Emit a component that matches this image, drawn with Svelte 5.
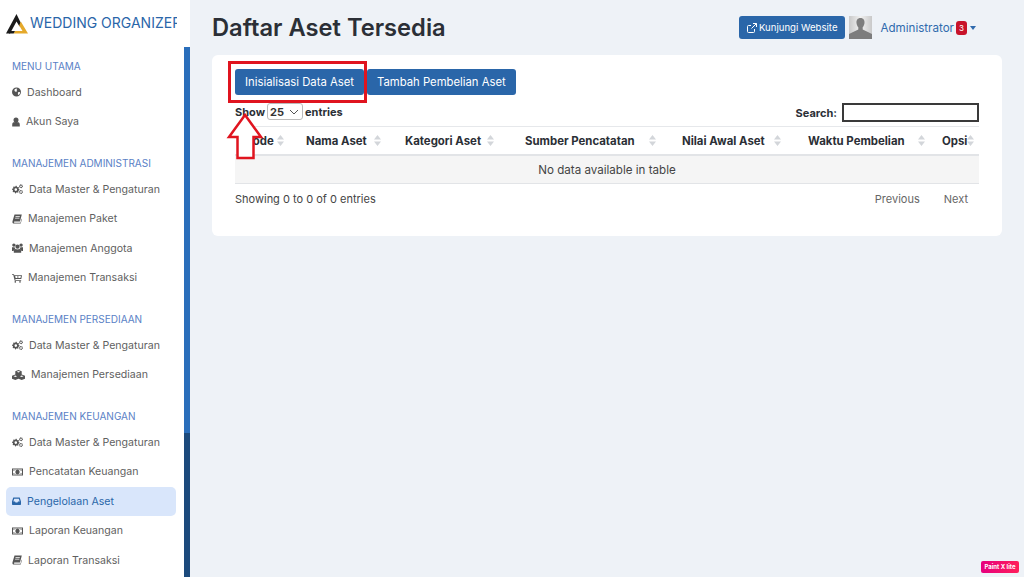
<script>
	// gear outline as a path, hole cut through with evenodd
	function gear(cx, cy, r, hole, teeth = 8) {
		let d = '';
		for (let i = 0; i < teeth * 4; i++) {
			const a = (i / (teeth * 4)) * Math.PI * 2;
			const rad = i % 4 < 2 ? r : r * 0.78;
			d += `${i ? 'L' : 'M'}${(cx + rad * Math.cos(a)).toFixed(2)} ${(cy + rad * Math.sin(a)).toFixed(2)}`;
		}
		d += 'z';
		d += `M${cx - hole} ${cy}a${hole} ${hole} 0 1 0 ${hole * 2} 0a${hole} ${hole} 0 1 0 ${-hole * 2} 0z`;
		return d;
	}

	const icons = {
		globe: { w: 9, d: 'M4.5.5a4.5 4.5 0 1 0 0 9a4.5 4.5 0 1 0 0-9zM2.6 2.2l1.7-.8 1 .6-.9 1 .7.8-1 1.2-1.6-.9zM6 5.2l1.8-.2.4 1-1.4 2-.9-.6z' },
		user: { w: 8, d: 'M4 .4a2.5 2.5 0 1 0 0 5a2.5 2.5 0 1 0 0-5zM.2 9.6V7.8c0-1.6.9-2.7 2-2.7.5.5 3.1.5 3.6 0 1.1 0 2 1.1 2 2.7v1.8z' },
		cogs: { w: 11, d: gear(3.8, 5.6, 3.8, 1.3) + gear(9, 2.3, 2, 0.9, 6) + gear(9, 8, 2, 0.9, 6) },
		book: { w: 10, d: 'M2.5.6h7.3L8 7.6H2.6c-.9 0-.9 1.1 0 1.1h5.9l1.1-4 .4.4-1.3 4.5H2C.7 9.6.2 8.5.5 7.2zM3.6 2.3l-.2.7h4.3l.2-.7zM3.2 3.8l-.2.7h4.3l.2-.7z' },
		users: { w: 11, d: 'M5.5 1.6a2.1 2.1 0 1 0 0 4.2a2.1 2.1 0 1 0 0-4.2zM1.9.4a1.7 1.7 0 1 0 0 3.4a1.7 1.7 0 1 0 0-3.4zM9.1.4a1.7 1.7 0 1 0 0 3.4a1.7 1.7 0 1 0 0-3.4zM0 4.3h2.6c.1.8.4 1.3.8 1.7-1 .3-1.6 1.1-1.8 2H0zM11 4.3H8.4c-.1.8-.4 1.3-.8 1.7 1 .3 1.6 1.1 1.8 2H11zM3.6 6c.5.5 3.3.5 3.8 0 1.1.1 1.8 1.1 1.8 2.4v1.4H1.8V8.4C1.8 7.1 2.5 6.1 3.6 6z' },
		cart: { w: 10, d: 'M0 1.2h2l.3 1h7.7l-.7 3.8H3.3l.2.9h5.7v.9H2.7L1.3 2.1H0zM3.2 3.1l.4 2h4.900l.4-2zM5.5 3.1h.8v2h-.8zM3.3 8.1a.8.8 0 1 0 0 1.6a.8.8 0 1 0 0-1.6zM8 8.1a.8.8 0 1 0 0 1.6a.8.8 0 1 0 0-1.6z' },
		cubes: { w: 13, d: 'M6.5 0l3.2 1.2v3.3L6.5 5.7 3.3 4.5V1.2zM6.5 1L4.7 1.7l1.8.7 1.8-.7zM3.3 4.6l3.2 1.2v3L3.3 10 0 8.8v-3zM3.3 5.6L1.5 6.3l1.8.7 1.8-.7zM9.7 4.6L13 5.8v3L9.700 10 6.5 8.8v-3zM9.700 5.6L7.9 6.3l1.8.7 1.8-.7z' },
		money: { w: 11, d: 'M0 1.4h11v7.2H0zM1 2.4v5.2h9V2.4zM5.5 2.8a2.2 2.2 0 1 0 0 4.4a2.2 2.2 0 1 0 0-4.4zM1.5 2.9h1.4L1.5 4.3zM9.5 2.9H8.1l1.4 1.4zM1.5 7.1h1.4L1.5 5.7zM9.5 7.1H8.1l1.4-1.4z' },
		inbox: { w: 9, d: 'M1.7 1.5h5.6c.3 0 .5.1.6.4L9 5.5v2.7c0 .4-.3.7-.7.7H.7c-.4 0-.7-.3-.7-.7V5.5l1.1-3.6c.1-.3.3-.4.6-.4zM2.2 2.7l-.9 2.9H3l.5 1h2l.5-1h1.700l-.9-2.9z' }
	};

	const sections = [
		{ title: 'MENU UTAMA', items: [['globe', 'Dashboard'], ['user', 'Akun Saya']] },
		{
			title: 'MANAJEMEN ADMINISTRASI',
			items: [['cogs', 'Data Master & Pengaturan'], ['book', 'Manajemen Paket'], ['users', 'Manajemen Anggota'], ['cart', 'Manajemen Transaksi']]
		},
		{ title: 'MANAJEMEN PERSEDIAAN', items: [['cogs', 'Data Master & Pengaturan'], ['cubes', 'Manajemen Persediaan']] },
		{
			title: 'MANAJEMEN KEUANGAN',
			items: [['cogs', 'Data Master & Pengaturan'], ['money', 'Pencatatan Keuangan'], ['inbox', 'Pengelolaan Aset', true], ['money', 'Laporan Keuangan'], ['book', 'Laporan Transaksi']]
		}
	];

	// width of each column and the space between label and sort arrows
	const columns = [
		{ label: 'Kode', width: 61, gap: 3 },
		{ label: 'Nama Aset', width: 99, gap: 7 },
		{ label: 'Kategori Aset', width: 120, gap: 6 },
		{ label: 'Sumber Pencatatan', width: 157, gap: 14 },
		{ label: 'Nilai Awal Aset', width: 126, gap: 9 },
		{ label: 'Waktu Pembelian', width: 134, gap: 13 },
		{ label: 'Opsi', width: 47, gap: 0 }
	];
</script>

<div class="page">
	<aside class="sidebar">
		<div class="brand">
			<svg class="logo" width="22" height="20" viewBox="0 0 22 20">
				<path d="M10.5 0L0 19.5h4L10.5 7.5l3 5 1.7-2.700z" fill="#1b1b1b" />
				<path d="M14.8 7.5L22 19.5H7.5l1.500-2.500h7.500l-3.300-5.500z" fill="#e5a92b" />
				<path d="M3 17h6l-1.400 2.500H3z" fill="#1b1b1b" />
			</svg>
			<span class="brand-name">WEDDING ORGANIZER</span>
		</div>
		<div class="sidebar-body">
			<nav>
				{#each sections as section}
					<h6>{section.title}</h6>
					{#each section.items as [icon, label, active]}
						<a href="#top" class:active>
							<svg width={icons[icon].w} height="10" viewBox="0 0 {icons[icon].w} 10">
								<path d={icons[icon].d} fill="currentColor" fill-rule="evenodd" />
							</svg>
							{label}
						</a>
					{/each}
				{/each}
			</nav>
			<div class="scrollbar"><div class="thumb"></div></div>
		</div>
	</aside>

	<main>
		<header>
			<h1>Daftar Aset Tersedia</h1>
			<div class="top-actions">
				<button class="btn small">
					<svg width="10" height="10" viewBox="0 0 10 10" fill="none" stroke="currentColor" stroke-width="1">
						<path d="M7.5 6v2.5a1 1 0 0 1-1 1h-5a1 1 0 0 1-1-1v-5a1 1 0 0 1 1-1H4M6 .5h3.5V4M9.5.5L4.5 5.5" />
					</svg>
					Kunjungi Website
				</button>
				<svg class="avatar" width="23" height="23" viewBox="0 0 23 23">
					<defs>
						<linearGradient id="avatar-bg" x1="0" y1="0" x2="1" y2="0">
							<stop offset="0" stop-color="#c9c9c9" />
							<stop offset="0.5" stop-color="#f1f1f1" />
							<stop offset="1" stop-color="#c9c9c9" />
						</linearGradient>
					</defs>
					<rect width="23" height="23" fill="url(#avatar-bg)" />
					<path d="M11.5 2c-3 0-4.3 2.3-4 5 .2 1.5.8 3.3 1.8 4.3v2.2L0 18v5h23v-5l-9.300-4.500v-2.200c1-1 1.600-2.800 1.800-4.300.3-2.700-1-5-4-5z" fill="#7d7d7d" />
				</svg>
				<span class="admin">Administrator</span>
				<span class="badge">3</span>
				<span class="caret"></span>
			</div>
		</header>

		<section class="card">
			<div class="actions">
				<button class="btn">Inisialisasi Data Aset</button>
				<button class="btn">Tambah Pembelian Aset</button>
			</div>
			<div class="controls">
				<label>
					Show
					<select><option>25</option></select>
					entries
				</label>
				<label>
					Search:
					<input type="search" />
				</label>
			</div>
			<table>
				<colgroup>
					{#each columns as col}
						<col style="width: {col.width}px" />
					{/each}
				</colgroup>
				<thead>
					<tr>
						{#each columns as col}
							<th>
								<span class="th-inner" style="gap: {col.gap}px">
									{col.label}
									<svg class="sort" width="7" height="11" viewBox="0 0 7 11">
										<path d="M3.5 0L7 4.5H0zM3.5 11L0 6.5h7z" fill="#d3d6da" />
									</svg>
								</span>
							</th>
						{/each}
					</tr>
				</thead>
				<tbody>
					<tr><td colspan="7">No data available in table</td></tr>
				</tbody>
			</table>
			<div class="table-footer">
				<span>Showing 0 to 0 of 0 entries</span>
				<div class="pager">
					<span>Previous</span>
					<span>Next</span>
				</div>
			</div>
		</section>
	</main>

	<!-- annotations drawn on top of the screenshot -->
	<div class="mark-box"></div>
	<svg class="mark-arrow" width="38" height="48" viewBox="0 0 38 48">
		<path d="M19 3L3 25h8.5v21h16V25H35z" fill="#fff" stroke="#e0141f" stroke-width="2.5" />
	</svg>
	<div class="watermark">Paint X lite</div>
</div>

<style>
	:global(body) {
		margin: 0;
		background: #eef2f7;
	}

	.page {
		position: relative;
		display: flex;
		height: 577px;
		overflow: hidden;
		background: #eef2f7;
		font-family: Inter, 'Open Sans', sans-serif;
		color: #444;
	}

	.sidebar {
		width: 190px;
		flex: none;
		display: flex;
		flex-direction: column;
		background: #fff;
	}

	.brand {
		height: 45px;
		margin-bottom: 2px;
		flex: none;
		display: flex;
		align-items: center;
		gap: 2px;
		padding: 0 13px 0 6px;
		overflow: hidden;
		box-sizing: border-box;
	}

	.logo {
		flex: none;
		margin-top: 3px;
	}

	.brand-name {
		font-size: 14px;
		color: #2a66a9;
		white-space: nowrap;
		overflow: hidden;
	}

	.sidebar-body {
		flex: 1;
		display: flex;
		min-height: 0;
	}

	nav {
		flex: 1;
		padding: 8px 8px 0 6px;
		overflow: hidden;
	}

	h6 {
		margin: 0 0 0 6px;
		height: 22.5px;
		line-height: 23px;
		font-size: 10px;
		font-weight: 400;
		color: #5a7fc6;
		white-space: nowrap;
	}

	nav a + h6 {
		margin-top: 15.5px;
	}

	nav a {
		display: flex;
		align-items: center;
		gap: 6px;
		height: 29.5px;
		padding-left: 6px;
		border-radius: 5px;
		font-size: 10.6px;
		color: #5f5f5f;
		text-decoration: none;
		white-space: nowrap;
	}

	nav a svg {
		flex: none;
		color: #555;
	}

	nav a.active {
		background: #d9e6fb;
		color: #2a66a9;
	}

	nav a.active svg {
		color: #2a66a9;
	}

	.scrollbar {
		width: 6px;
		flex: none;
		background: #1c4a7c;
	}

	.thumb {
		height: 386px;
		background: #2a6ebb;
	}

	main {
		flex: 1;
		padding: 0 22px;
		min-width: 0;
	}

	header {
		height: 55px;
		display: flex;
		align-items: center;
		justify-content: space-between;
		padding-right: 26px;
	}

	h1 {
		margin: 0;
		font-size: 23.7px;
		font-weight: 600;
		color: #2b2f36;
	}

	.top-actions {
		display: flex;
		align-items: center;
	}

	.btn {
		height: 26px;
		padding: 0 10px;
		border: 0;
		border-radius: 3px;
		background: #2a66a9;
		color: #fff;
		font: inherit;
		font-size: 11.3px;
	}

	.btn.small {
		display: flex;
		align-items: center;
		gap: 2px;
		height: 23px;
		padding: 0 8px;
		font-size: 9.6px;
		margin-right: 4px;
	}

	.avatar {
		margin-right: 8px;
	}

	.admin {
		font-size: 11.6px;
		color: #2f6aad;
	}

	.badge {
		margin-left: 2px;
		width: 11px;
		height: 14px;
		line-height: 14px;
		border-radius: 3px;
		background: #c8132a;
		color: #fff;
		font-size: 8px;
		text-align: center;
	}

	.caret {
		margin-left: 3px;
		border-top: 4px solid #2f6aad;
		border-left: 3.5px solid transparent;
		border-right: 3.5px solid transparent;
	}

	.card {
		height: 181px;
		box-sizing: border-box;
		padding: 14px 23px;
		background: #fff;
		border-radius: 6px;
	}

	.actions {
		display: flex;
		gap: 3px;
		margin-bottom: 8px;
	}

	.controls {
		display: flex;
		justify-content: space-between;
		align-items: flex-start;
		height: 23px;
		font-size: 11px;
		font-weight: 700;
		color: #2b2f36;
	}

	.controls label {
		display: flex;
		align-items: center;
		gap: 2px;
	}

	select {
		appearance: none;
		width: 36px;
		height: 17px;
		padding: 0 0 0 2px;
		font: inherit;
		color: #333;
		border: 1px solid #bbb;
		border-radius: 3px;
		background: #fff url("data:image/svg+xml,%3Csvg xmlns='http://www.w3.org/2000/svg' width='10' height='6'%3E%3Cpath d='M1 1l4 4 4-4' fill='none' stroke='%23555'/%3E%3C/svg%3E") no-repeat right 3px center;
	}

	input {
		width: 137px;
		height: 19px;
		box-sizing: border-box;
		margin-left: 3px;
		border: 2px solid #3a3a3a;
		background: #fff;
		padding: 0;
	}

	table {
		width: 744px;
		table-layout: fixed;
		border-collapse: collapse;
		border-top: 1px solid #e6e8eb;
		font-size: 11.4px;
	}

	th {
		height: 27px;
		padding: 0 0 0 10px;
		font-weight: 700;
		color: #2b2f36;
		text-align: left;
		border-bottom: 2px solid #e2e4e7;
		white-space: nowrap;
	}

	.th-inner {
		display: inline-flex;
		align-items: center;
	}

	td {
		height: 27px;
		padding: 0;
		background: #f5f5f5;
		text-align: center;
		border-bottom: 1px solid #e2e4e7;
		color: #444;
		font-size: 11.6px;
	}

	.table-footer {
		display: flex;
		justify-content: space-between;
		align-items: center;
		height: 30px;
		font-size: 11px;
	}

	.pager {
		display: flex;
		gap: 24px;
		padding-right: 11px;
		color: #666;
	}

	.mark-box {
		position: absolute;
		left: 228px;
		top: 61px;
		width: 133px;
		height: 36px;
		border: 3px solid #e0141f;
	}

	.mark-arrow {
		position: absolute;
		left: 226px;
		top: 112px;
	}

	.watermark {
		position: absolute;
		left: 981px;
		top: 561px;
		width: 38px;
		height: 12px;
		line-height: 12px;
		border-radius: 2px;
		background: linear-gradient(90deg, #e6007e, #ff1f5a);
		color: #fff;
		font-size: 6px;
		font-weight: 700;
		text-align: center;
		white-space: nowrap;
	}
</style>
